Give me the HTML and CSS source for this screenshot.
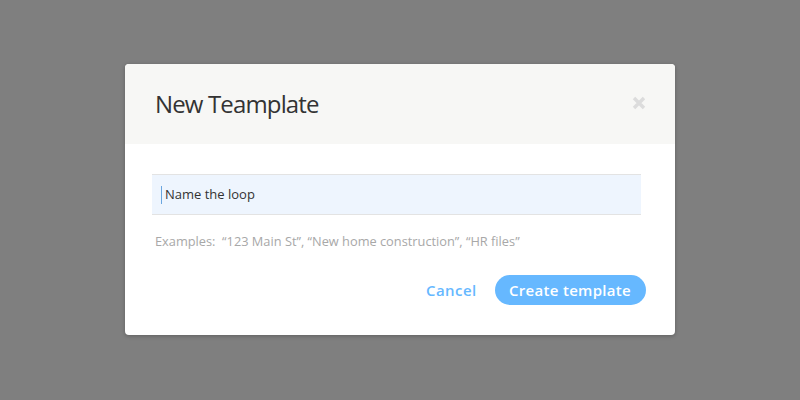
FILE: index.html
```html
<!DOCTYPE html>
<html>
<head>
<meta charset="utf-8">
<link rel="stylesheet" href="styles.css">
</head>
<body>
<div class="overlay">
  <div class="modal">
    <div class="modal-header">
      <h1 class="title">New Teamplate</h1>
      <svg class="close" width="14" height="14" viewBox="0 0 14 14">
        <path d="M2 2 L12 12 M12 2 L2 12" stroke="#dcdcdc" stroke-width="3.4" stroke-linecap="butt"/>
      </svg>
    </div>
    <div class="modal-body">
      <div class="field">
        <span class="caret"></span>
        <span class="field-text">Name the loop</span>
      </div>
      <p class="hint">Examples:&nbsp; “123 Main St”, “New home construction”, “HR files”</p>
      <div class="actions">
        <span class="cancel">Cancel</span>
        <span class="create">Create template</span>
      </div>
    </div>
  </div>
</div>
</body>
</html>
```
FILE: styles.css
```css
html, body { margin: 0; padding: 0; }
body {
  width: 800px;
  height: 400px;
  background: #7f7f7f;
  font-family: "Open Sans", sans-serif;
}
.overlay {
  display: flex;
  justify-content: center;
  padding-top: 64px;
}
.modal {
  width: 550px;
  height: 271px;
  background: #fff;
  border-radius: 4px;
  overflow: hidden;
  box-shadow: 0 1px 4px rgba(0,0,0,0.25);
}
.modal-header {
  height: 80px;
  background: #f7f7f5;
  display: flex;
  align-items: center;
  justify-content: space-between;
  padding: 0 29px 0 30px;
}
.title {
  margin: 0;
  font-size: 24px;
  font-weight: 400;
  letter-spacing: -0.85px;
  color: #333;
  position: relative;
  top: -1px;
}
.close { position: relative; top: -1px; }
.modal-body {
  padding: 30px 34px 0 27px;
}
.field {
  height: 39px;
  border-top: 1px solid #e3e3e3;
  border-bottom: 1px solid #e3e3e3;
  background: #eef5fe;
  display: flex;
  align-items: center;
  padding-left: 9px;
}
.caret {
  width: 1px;
  height: 18px;
  background: #6aa6e0;
  margin-right: 3px;
}
.field-text {
  font-size: 13px;
  color: #333;
  position: relative;
  top: -1px;
}
.hint {
  margin: 17px 0 0 3px;
  font-size: 12.8px;
  color: #a8a8a8;
}
.actions {
  display: flex;
  justify-content: flex-end;
  align-items: center;
  margin-top: 25px;
  margin-right: -5px;
}
.cancel {
  font-size: 15px;
  font-weight: 600;
  color: #66b8ff;
  margin-right: 18px;
  letter-spacing: 0.4px;
}
.create {
  height: 30px;
  line-height: 30px;
  padding: 0 15px 0 14.5px;
  border-radius: 15px;
  background: #66b8ff;
  color: #fff;
  font-size: 15px;
  font-weight: 600;
  letter-spacing: 0.3px;
}
```
